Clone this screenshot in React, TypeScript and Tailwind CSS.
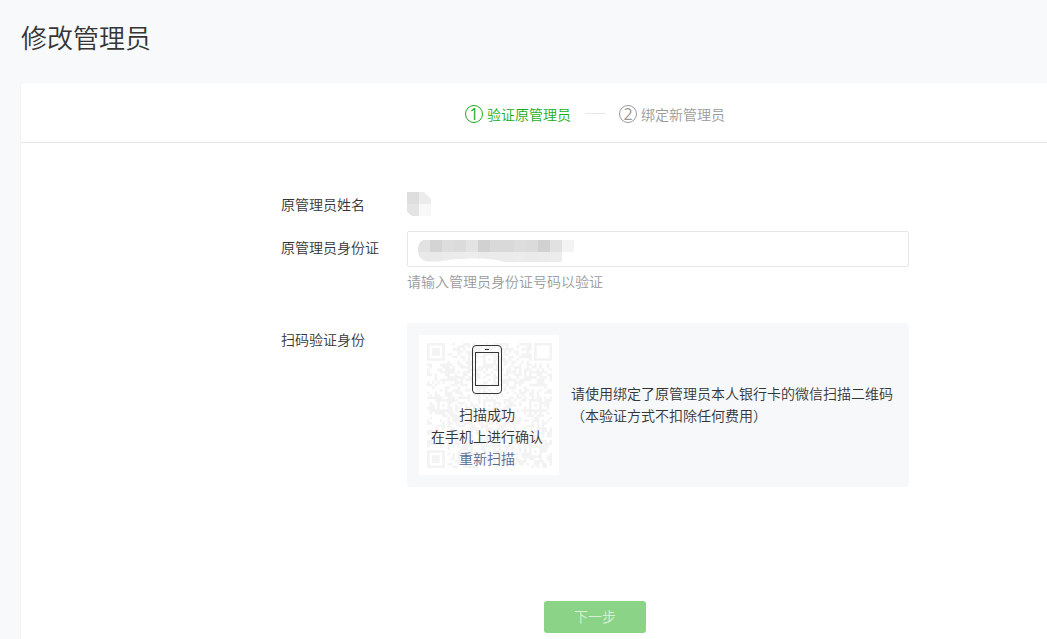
import React, { useState } from 'react';

const SIZE = 49;

function inFinder(x: number, y: number) {
  return (x < 8 && y < 8) || (x >= SIZE - 8 && y < 8) || (x < 8 && y >= SIZE - 8);
}

function ringOn(dx: number, dy: number, rings: number[]) {
  return rings.includes(Math.max(Math.abs(dx), Math.abs(dy)));
}

function buildModules() {
  let seed = 20177;
  let path = '';
  const aligns = [[6, 24], [24, 6], [24, 24], [24, 42], [42, 24], [42, 42]];
  for (let y = 0; y < SIZE; y++) {
    for (let x = 0; x < SIZE; x++) {
      seed = (seed * 1103515245 + 12345) % 2147483648;
      let on = seed / 2147483648 > 0.5;
      if (inFinder(x, y)) {
        const cx = x < 8 ? 3 : SIZE - 4;
        const cy = y < 8 ? 3 : SIZE - 4;
        on = ringOn(x - cx, y - cy, x < 8 ? [0, 1, 3] : [3]);
      } else {
        const a = aligns.find(([ax, ay]) => Math.abs(ax - x) <= 2 && Math.abs(ay - y) <= 2);
        if (a) on = ringOn(x - a[0], y - a[1], [0, 2]);
      }
      if (on) path += `M${x} ${y}h1v1h-1z`;
    }
  }
  return path;
}

const MODULES = buildModules();

function QrCode() {
  return (
    <svg aria-hidden="true" viewBox="0 0 49 49" className="absolute inset-2 size-[125px]">
      <path d={MODULES} fill="#f3f3f3" />
    </svg>
  );
}

function PhoneIcon() {
  return (
    <svg aria-hidden="true" width="30" height="49" viewBox="0 0 30 49" fill="none" stroke="#353535">
      <rect x="0.5" y="0.5" width="29" height="48" rx="3.5" />
      <rect x="3.5" y="7.5" width="23" height="33" />
      <path d="M13 4.5h4" />
    </svg>
  );
}

function Step({ n, label, active }: { n: number; label: string; active?: boolean }) {
  return (
    <li className={active ? 'flex items-center gap-1 text-[#1aad19]' : 'flex items-center gap-1 text-[#9a9a9a]'}>
      <span className="flex size-[18px] items-center justify-center rounded-full border border-current font-['Open_Sans',sans-serif] text-base leading-4 font-normal">{n}</span>
      {label}
    </li>
  );
}

function NameMosaic() {
  return (
    <svg aria-label="原管理员姓名" role="img" width="24" height="24" viewBox="0 0 24 24">
      <path d="M0 0h12v12H0z" fill="#dedede" />
      <path d="M12 0h5l7 7v5H12z" fill="#ececec" />
      <path d="M0 12h12v12H5l-5-4z" fill="#e4e4e4" />
      <path d="M12 12h12v12H12z" fill="#f8f8f8" />
    </svg>
  );
}

const TOP = ['#e2e2e2', '#d4d4d4', '#dddddd', '#dbdbdb', '#e3e3e3', '#d1d1d1', '#d9d9d9', '#d9d9d9', '#dddddd', '#dbdbdb', '#d1d1d1', '#e1e1e1', '#f3f3f3'];
const BOTTOM = ['#e9e9e9', '#e9e9e9', '#ebebeb', '#ececec', '#ededed', '#ebebeb', '#ebebeb', '#ebebeb', '#ececec', '#eaeaea', '#ebebeb', '#ececec'];

function IdMosaic() {
  return (
    <svg aria-hidden="true" width="156" height="22" viewBox="0 0 156 22" className="pointer-events-none absolute top-[9px] left-[11px]">
      <clipPath id="smear">
        <path d="M5 0H156V12H144V22H86Q76 18 54 18.500Q32 19 20 21.500H9Q0 19 0 11Q0 2 5 0z" />
      </clipPath>
      <g clipPath="url(#smear)">
        {TOP.map((c, i) => <rect key={i} x={i * 12} width="12" height="12" fill={c} />)}
        {BOTTOM.map((c, i) => <rect key={i} x={i * 12} y="12" width="12" height="10" fill={c} />)}
      </g>
    </svg>
  );
}

export default function App() {
  const [id, setId] = useState('');
  return (
    <div className="flex min-h-screen flex-col bg-[#f8f9fb] pl-[21px] font-['Noto_Sans_CJK_SC',sans-serif] text-sm leading-[22px] font-[350] text-[#353535]">
      <h1 className="pt-[19px] pb-7 text-[26px] leading-9 font-[350]">修改管理员</h1>
      <main className="flex-1 rounded-tl-sm bg-white shadow-[0_1px_2px_rgba(0,0,0,0.1)]">
        <ol className="flex h-[60px] items-center justify-center gap-[14px] border-b border-[#e7e7eb] pt-0.5 pl-[122px]">
          <Step n={1} label="验证原管理员" active />
          <li aria-hidden="true" className="w-5 border-t border-[#e7e7eb]" />
          <Step n={2} label="绑定新管理员" />
        </ol>
        <form className="flex flex-col items-center pt-[49px] pl-[122px]" onSubmit={(e) => e.preventDefault()}>
          <div className="grid grid-cols-[126px_502px]">
            <span className="pt-px">原管理员姓名</span>
            <div className="h-[39px]"><NameMosaic /></div>

            <label htmlFor="admin-id" className="pt-[5px]">原管理员身份证</label>
            <div>
              <div className="relative">
                <input
                  id="admin-id"
                  value={id}
                  onChange={(e) => setId(e.target.value)}
                  className="block h-9 w-full rounded-xs border border-[#e7e7eb] bg-white px-2.5 outline-none"
                />
                <IdMosaic />
              </div>
              <p className="pt-[3px] text-[#9a9a9a]">请输入管理员身份证号码以验证</p>
            </div>

            <span className="pt-9">扫码验证身份</span>
            <div className="mt-[31px] flex items-center gap-3 rounded-sm bg-[#f6f8fa] p-3">
              <div className="relative size-[140px] shrink-0 bg-white">
                <QrCode />
                <div className="relative flex flex-col items-center pt-2.5 pr-1">
                  <PhoneIcon />
                  <p className="pt-[9px]">扫描成功</p>
                  <p>在手机上进行确认</p>
                  <a href="#rescan" className="text-[#576b95]">重新扫描</a>
                </div>
              </div>
              <p className="pb-0.5 whitespace-nowrap">
                请使用绑定了原管理员本人银行卡的微信扫描二维码<br />（本验证方式不扣除任何费用）
              </p>
            </div>
          </div>
          <button type="submit" className="mt-[114px] h-8 w-[102px] rounded-[3px] bg-[#8bd387] pb-0.5 text-[#d6f0d5]">下一步</button>
        </form>
      </main>
    </div>
  );
}
